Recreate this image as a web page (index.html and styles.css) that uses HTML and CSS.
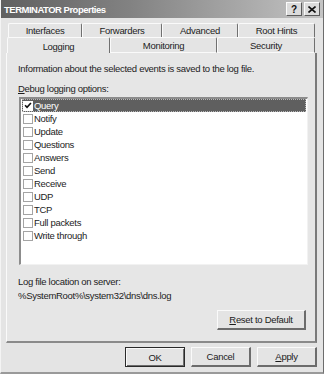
FILE: index.html
```html
<!DOCTYPE html>
<html lang="en">
<head>
  <meta charset="UTF-8">
  <meta name="viewport" content="width=device-width, initial-scale=1.0">
  <title>TERMINATOR Properties</title>

  <link rel="stylesheet" href="styles.css">
</head>
<body>
  <div class="window">
    <div class="titlebar">
      <span class="title">TERMINATOR Properties</span>
      <div class="caption-btns">
        <span class="cbtn">?</span>
        <span class="cbtn close">
          <svg width="8" height="7" viewBox="0 0 8 7"><path d="M0.5 0.5 L7.5 6.5 M7.5 0.5 L0.5 6.5" stroke="#111" stroke-width="1.6"/></svg>
        </span>
      </div>
    </div>

    <div class="tabs">
      <div class="tab-row back">
        <div class="tab" style="width: 74px">Interfaces</div>
        <div class="tab" style="width: 80px">Forwarders</div>
        <div class="tab" style="width: 76px">Advanced</div>
        <div class="tab" style="width: 77px">Root Hints</div>
      </div>
      <div class="tab-row front">
        <div class="tab selected" style="width: 103px">Logging</div>
        <div class="tab" style="width: 107px">Monitoring</div>
        <div class="tab" style="width: 98px">Security</div>
      </div>
    </div>

    <div class="panel">
      <p class="line info">Information about the selected events is saved to the log file.</p>
      <p class="line label"><u>D</u>ebug logging options:</p>

      <div class="listbox">
        <div class="item selected">
          <span class="check">
            <svg width="9" height="9" viewBox="0 0 9 9"><path d="M1.2 4.2 L3.4 6.6 L7.8 1.6" fill="none" stroke="#111" stroke-width="1.8"/></svg>
          </span>
          <span class="text">Query</span>
        </div>
        <div class="item"><span class="check"></span><span class="text">Notify</span></div>
        <div class="item"><span class="check"></span><span class="text">Update</span></div>
        <div class="item"><span class="check"></span><span class="text">Questions</span></div>
        <div class="item"><span class="check"></span><span class="text">Answers</span></div>
        <div class="item"><span class="check"></span><span class="text">Send</span></div>
        <div class="item"><span class="check"></span><span class="text">Receive</span></div>
        <div class="item"><span class="check"></span><span class="text">UDP</span></div>
        <div class="item"><span class="check"></span><span class="text">TCP</span></div>
        <div class="item"><span class="check"></span><span class="text">Full packets</span></div>
        <div class="item"><span class="check"></span><span class="text">Write through</span></div>
      </div>

      <p class="line loglabel">Log file location on server:</p>
      <p class="line path">%SystemRoot%\system32\dns\dns.log</p>

      <div class="reset-row">
        <button class="btn reset"><u>R</u>eset to Default</button>
      </div>
    </div>

    <div class="actions">
      <button class="btn default">OK</button>
      <button class="btn">Cancel</button>
      <button class="btn"><u>A</u>pply</button>
    </div>
  </div>
</body>
</html>
```

FILE: styles.css
```css
* {
  box-sizing: border-box;
}

body {
  margin: 0;
  background: #e4e4e4;
  font-family: "Liberation Sans", Arial, sans-serif;
  font-size: 9.5px;
  letter-spacing: -0.3px;
  color: #1c1c1c;
}

.window {
  width: 324px;
  height: 374px;
  background: #e4e4e4;
  border-left: 1px solid #f4f4f4;
  border-right: 1px solid #6c6c6c;
  border-bottom: 2px solid #9a9a9a;
  display: flex;
  flex-direction: column;
}

/* title bar */
.titlebar {
  height: 18px;
  flex: none;
  display: flex;
  align-items: center;
  justify-content: space-between;
  padding: 0 3px 0 3px;
  background: linear-gradient(to right, #606060 0%, #828282 40%, #c4c4c4 100%);
}

.title {
  color: #fff;
  font-weight: bold;
  font-size: 9.5px;
  letter-spacing: -0.5px;
}

.caption-btns {
  display: flex;
  gap: 2px;
}

.cbtn {
  width: 16px;
  height: 14px;
  display: flex;
  align-items: center;
  justify-content: center;
  background: #dcdcdc;
  border-top: 1px solid #fbfbfb;
  border-left: 1px solid #fbfbfb;
  border-right: 1px solid #5a5a5a;
  border-bottom: 1px solid #5a5a5a;
  font-weight: bold;
  font-size: 10px;
  color: #111;
}

/* tabs */
.tabs {
  flex: none;
  margin-top: 5px;
  display: flex;
  flex-direction: column;
}

.tab-row {
  display: flex;
}

.tab-row.back {
  padding-left: 7px;
  height: 14px;
}

.tab-row.front {
  padding-left: 6px;
  height: 16px;
}

.tab {
  display: flex;
  align-items: center;
  justify-content: center;
  background: #e4e4e4;
  border-top: 1px solid #fafafa;
  border-left: 1px solid #fafafa;
  border-right: 1px solid #707070;
  border-radius: 2px 2px 0 0;
}

.tab-row.front .tab {
  border-bottom: 1px solid #fafafa;
  padding-top: 1px;
}

.tab-row.front .tab.selected {
  border-bottom: none;
  background: #e6e6e6;
}

/* property page */
.panel {
  flex: none;
  width: 311px;
  height: 290px;
  margin-left: 5px;
  background: #e6e6e6;
  border-left: 1px solid #fafafa;
  border-right: 2px solid #7a7a7a;
  border-bottom: 2px solid #8a8a8a;
  padding: 9px 0 0 11px;
}

.line {
  margin: 0;
  height: 13px;
  line-height: 13px;
  white-space: nowrap;
}

.label {
  margin-top: 7px;
}

.listbox {
  margin-top: 2px;
  margin-left: 1px;
  width: 289px;
  height: 168px;
  background: #fff;
  border-top: 2px solid #8c8c8c;
  border-left: 2px solid #8c8c8c;
  border-right: 1px solid #f2f2f2;
  border-bottom: 1px solid #f2f2f2;
  padding: 0 1px;
}

.item {
  height: 13px;
  display: flex;
  align-items: center;
  gap: 1px;
}

.item.selected {
  background: #5f5f5f;
  outline: 1px dotted #b8b8b8;
  outline-offset: -1px;
}

.item.selected .text {
  color: #fff;
}

.check {
  width: 10px;
  height: 10px;
  margin-left: 1px;
  background: #fff;
  border: 1px solid #a4a4a4;
  display: flex;
  align-items: center;
  justify-content: center;
}

.item.selected .check {
  border-color: #fff;
}

.loglabel {
  margin-top: 10px;
}

.path {
  margin-top: 1px;
}

.reset-row {
  display: flex;
  justify-content: flex-end;
  padding-right: 9px;
  margin-top: 8px;
}

/* buttons */
.btn {
  font-family: inherit;
  font-size: 9.5px;
  letter-spacing: -0.3px;
  color: #1c1c1c;
  height: 20px;
  padding: 0;
  background: #e4e4e4;
  border-top: 1px solid #fafafa;
  border-left: 1px solid #fafafa;
  border-right: 2px solid #6c6c6c;
  border-bottom: 2px solid #6c6c6c;
}

.reset {
  width: 89px;
}

.actions {
  display: flex;
  justify-content: flex-end;
  gap: 6px;
  padding: 4px 6px 0 0;
}

.actions .btn {
  width: 60px;
}

.btn.default {
  border: 1px solid #2a2a2a;
  box-shadow: inset 1px 1px 0 #fafafa, inset -1px -1px 0 #6c6c6c;
}
```
